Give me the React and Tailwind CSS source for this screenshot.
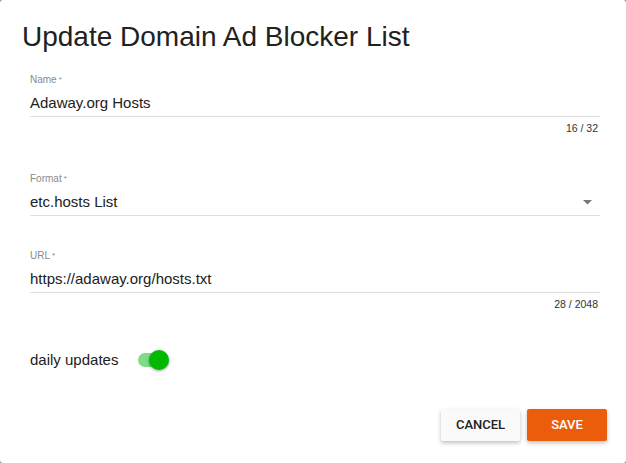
export default function App() {
  const font = { fontFamily: "'Liberation Sans', Arial, sans-serif" };
  const roboto = { fontFamily: "Roboto, 'Liberation Sans', sans-serif" };
  return (
    <div className="w-[626px] h-[463px] bg-[#8a8a8a]" style={font}>
      <div className="w-[626px] h-[463px] bg-white rounded-[3px] flex flex-col">
        <h1 className="pl-[22px] pt-[22px] text-[28px] leading-[30px] text-[#212121] font-normal">
          Update Domain Ad Blocker List
        </h1>
        <div className="pl-[30px] pr-[26px] flex flex-col mt-[22px]">
          <Field label="Name" value="Adaway.org Hosts" helper="16 / 32" />
          <div className="h-[39px]" />
          <Field label="Format" value="etc.hosts List" select />
          <div className="h-[34px]" />
          <Field label="URL" value="https://adaway.org/hosts.txt" helper="28 / 2048" />
          <div className="mt-[38px] flex items-center h-[24px]">
            <span className="text-[15px] text-[#212121]">daily updates</span>
            <div className="relative ml-[19px] w-[32px] h-[20px] flex items-center">
              <div className="w-[26px] h-[14px] rounded-full bg-[#7fdc86] ml-[1px]" />
              <div className="absolute right-0 top-0 w-[20px] h-[20px] rounded-full bg-[#00b900] shadow-[0_1px_3px_rgba(0,0,0,0.4)]" />
            </div>
          </div>
        </div>
        <div className="flex justify-end gap-[7px] pr-[19px] mt-[37px]" style={roboto}>
          <button className="w-[79px] h-[32px] rounded-[2px] bg-[#fafafa] text-[#212121] text-[13px] font-medium shadow-[0_2px_4px_rgba(0,0,0,0.25)]">
            CANCEL
          </button>
          <button className="w-[80px] h-[32px] rounded-[2px] bg-[#eb5c0b] text-white text-[13px] font-medium shadow-[0_2px_4px_rgba(0,0,0,0.25)]">
            SAVE
          </button>
        </div>
      </div>
    </div>
  );
}

function Field({ label, value, helper, select }) {
  return (
    <div className="flex flex-col">
      <div className="text-[10px] leading-[12px] text-[#8a8a8a]">
        {label}<span className="text-[8px] align-top ml-[2px]">*</span>
      </div>
      <div className="flex items-center justify-between border-b border-[#e0e0e0] h-[31px] pt-[5px]">
        <span className="text-[15px] text-[#212121]">{value}</span>
        {select && (
          <svg width="9" height="5" viewBox="0 0 9 5" className="mr-[8px]">
            <path d="M0 0 L9 0 L4.5 4.5 Z" fill="#777" />
          </svg>
        )}
      </div>
      {helper && (
        <div className="text-right text-[10.5px] leading-[12px] mt-[5px] pr-[2px] text-[#333]">{helper}</div>
      )}
    </div>
  );
}
